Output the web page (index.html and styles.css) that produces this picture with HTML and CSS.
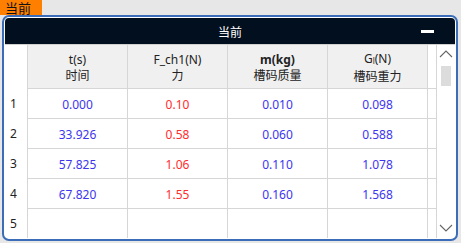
FILE: index.html
```html
<!DOCTYPE html>
<html>
<head>
<meta charset="utf-8">
<link rel="stylesheet" href="styles.css">
</head>
<body>
<div class="tab">当前</div>
<div class="panel">
  <div class="titlebar">
    <span class="title">当前</span>
    <span class="minus"></span>
  </div>
  <div class="body">
    <div class="grid">
      <div class="hc rn"></div>
      <div class="hc"><span>t(s)</span><span>时间</span></div>
      <div class="hc"><span>F_ch1(N)</span><span>力</span></div>
      <div class="hc"><span class="b">m(kg)</span><span>槽码质量</span></div>
      <div class="hc"><span>G<span class="sub">l</span>(N)</span><span>槽码重力</span></div>
      <div class="hc gap"></div>

      <div class="rn">1</div>
      <div class="c blue">0.000</div><div class="c red">0.10</div><div class="c blue">0.010</div><div class="c blue">0.098</div><div class="c gap"></div>
      <div class="rn">2</div>
      <div class="c blue">33.926</div><div class="c red">0.58</div><div class="c blue">0.060</div><div class="c blue">0.588</div><div class="c gap"></div>
      <div class="rn">3</div>
      <div class="c blue">57.825</div><div class="c red">1.06</div><div class="c blue">0.110</div><div class="c blue">1.078</div><div class="c gap"></div>
      <div class="rn">4</div>
      <div class="c blue">67.820</div><div class="c red">1.55</div><div class="c blue">0.160</div><div class="c blue">1.568</div><div class="c gap"></div>
      <div class="rn">5</div>
      <div class="c"></div><div class="c"></div><div class="c"></div><div class="c"></div><div class="c gap"></div>
    </div>
    <div class="scroll">
      <svg class="arrow" width="14" height="8" viewBox="0 0 14 8"><path d="M1 7 L7 1 L13 7" fill="none" stroke="#666" stroke-width="1.1"/></svg>
      <div class="thumb"></div>
      <div class="spacer"></div>
      <svg class="arrow" width="14" height="8" viewBox="0 0 14 8"><path d="M1 1 L7 7 L13 1" fill="none" stroke="#666" stroke-width="1.1"/></svg>
    </div>
  </div>
</div>
</body>
</html>
```

FILE: styles.css
```css
html, body {
  margin: 0;
  padding: 0;
}
body {
  width: 461px;
  height: 243px;
  background: #e7e7e7;
  font-family: "Noto Sans", "Noto Sans CJK SC", sans-serif;
  font-size: 12px;
  color: #222;
  overflow: hidden;
}
.tab {
  width: 42px;
  height: 15px;
  background: #ff8000;
  color: #111;
  font-family: "Noto Sans CJK SC", sans-serif;
  font-size: 13px;
  line-height: 15px;
  padding-left: 5px;
  box-sizing: border-box;
}
.panel {
  margin: 0 0 0 2px;
  width: 456px;
  height: 226px;
  box-sizing: border-box;
  border: 2px solid #3b6cb8;
  border-radius: 7px;
  padding: 1px;
  background: #fff;
  display: flex;
  flex-direction: column;
  overflow: hidden;
}
.titlebar {
  height: 26px;
  background: #020f1e;
  border-radius: 4px 4px 0 0;
  display: flex;
  align-items: center;
  justify-content: center;
  position: relative;
  flex: none;
}
.title {
  color: #fff;
  font-family: "Noto Sans CJK SC", sans-serif;
  font-size: 12px;
}
.minus {
  position: absolute;
  left: 416px;
  top: 12px;
  width: 13px;
  height: 3px;
  background: #fff;
}
.body {
  display: flex;
  flex: 1;
  border-top: 1px solid #d0d0d0;
}
.grid {
  display: grid;
  grid-template-columns: 22px 100px 100px 100px 100px 9px;
  grid-template-rows: 43px 30px 30px 30px 30px 30px;
  width: 431px;
}
.hc {
  background: #f0f0f0;
  border-left: 1px solid #d6d6d6;
  display: flex;
  flex-direction: column;
  align-items: center;
  justify-content: center;
  padding-top: 3px;
  box-sizing: border-box;
  line-height: 16px;
  color: #222;
  font-family: "Noto Sans", "Noto Sans CJK SC", sans-serif;
}
.hc.rn {
  background: #fff;
  border-left: none;
}
.hc.gap {
  background: #fff;
}
.b {
  font-weight: bold;
}
.sub {
  font-size: 8px;
  vertical-align: -1px;
}
.rn {
  display: flex;
  align-items: center;
  padding-left: 5px;
  color: #222;
}
.c {
  border-left: 1px solid #d6d6d6;
  border-top: 1px solid #d6d6d6;
  display: flex;
  align-items: center;
  justify-content: center;
  box-sizing: border-box;
  padding-top: 1px;
}
.blue {
  color: #3d35f0;
}
.red {
  color: #ff2d2d;
}
.scroll {
  width: 19px;
  border-left: 1px solid #d6d6d6;
  box-sizing: border-box;
  display: flex;
  flex-direction: column;
  align-items: center;
  padding: 5px 0 6px;
}
.arrow {
  flex: none;
  display: block;
}
.thumb {
  width: 10px;
  height: 20px;
  background: #dcdcdc;
  margin-top: 8px;
}
.spacer {
  flex: 1;
}
```
